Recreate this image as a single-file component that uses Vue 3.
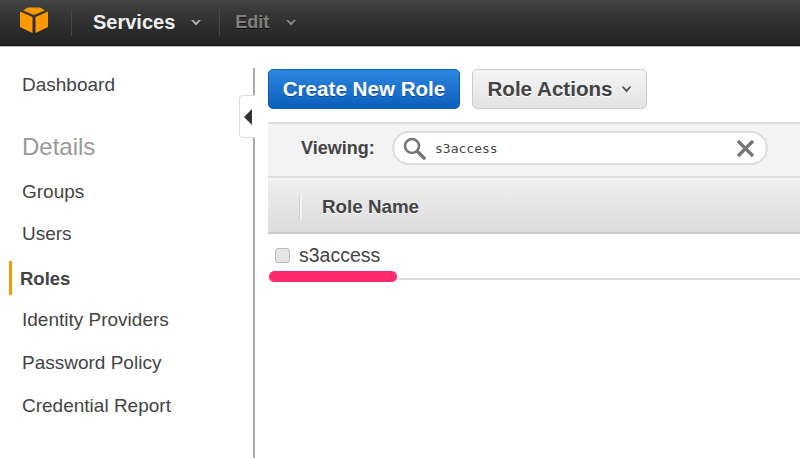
<script setup>
const navTop = ['Dashboard']
const navItems = [
  { label: 'Groups' },
  { label: 'Users' },
  { label: 'Roles', active: true },
  { label: 'Identity Providers' },
  { label: 'Password Policy' },
  { label: 'Credential Report' }
]
</script>

<template>
  <div class="page">
    <header class="topbar">
      <svg class="logo" width="28" height="27" viewBox="0 0 28 27">
        <path d="M0 4.5 L12.5 10 L12.5 26 L0 20 Z" fill="#f90" />
        <path d="M28 4.5 L15.5 10 L15.5 26 L28 20 Z" fill="#f90" />
        <path d="M8 0.5 L20 0.5 L25 3.5 L14 8 L3 3.5 Z" fill="#f90" />
      </svg>
      <span class="sep sep-a"></span>
      <span class="menu services">Services</span>
      <svg class="caret" width="12" height="8" viewBox="0 0 12 8"><path d="M1 1 L6 6.5 L11 1 L8.8 1 L6 3.6 L3.2 1 Z" fill="#b4b4b4" /></svg>
      <span class="sep sep-b"></span>
      <span class="menu edit">Edit</span>
      <svg class="caret" width="12" height="8" viewBox="0 0 12 8"><path d="M1 1 L6 6.5 L11 1 L8.8 1 L6 3.6 L3.2 1 Z" fill="#8a8a8a" /></svg>
    </header>

    <div class="body">
      <aside class="sidebar">
        <a v-for="n in navTop" :key="n" class="nav-item dash">{{ n }}</a>
        <div class="nav-title">Details</div>
        <a v-for="n in navItems" :key="n.label" class="nav-item" :class="{ active: n.active }">{{ n.label }}</a>
        <div class="handle">
          <svg width="9" height="16" viewBox="0 0 9 16"><path d="M8 0 L0 8 L8 16 Z" fill="#333" /></svg>
        </div>
      </aside>

      <main class="main">
        <div class="actions">
          <button class="btn primary">Create New Role</button>
          <button class="btn secondary">Role Actions
            <svg width="11" height="7" viewBox="0 0 11 7"><path d="M0.5 0.5 L5.5 6.5 L10.5 0.5 L8.4 0.5 L5.5 3.4 L2.6 0.5 Z" fill="#555" /></svg>
          </button>
        </div>

        <div class="filter">
          <span class="viewing">Viewing:</span>
          <div class="search">
            <svg class="glass" width="24" height="24" viewBox="0 0 24 24">
              <circle cx="10" cy="10" r="7" fill="none" stroke="#777" stroke-width="2.6" />
              <path d="M15.5 15.5 L22 22" stroke="#777" stroke-width="3.6" stroke-linecap="round" />
            </svg>
            <span class="query">s3access</span>
            <svg class="clear" width="19" height="19" viewBox="0 0 19 19">
              <path d="M2 2 L17 17 M17 2 L2 17" stroke="#757575" stroke-width="3.2" />
            </svg>
          </div>
        </div>

        <div class="thead">
          <span class="th-sep"></span>
          <span class="th">Role Name</span>
        </div>

        <div class="row">
          <span class="check"></span>
          <span class="cell">s3access</span>
          <span class="mark"></span>
        </div>
      </main>
    </div>
  </div>
</template>

<style>
html, body { margin: 0; background: #fff; overflow: hidden; }
</style>

<style scoped>
.page {
  width: 800px;
  height: 458px;
  overflow: hidden;
  font-family: "Liberation Sans", Arial, sans-serif;
  background: #fff;
  color: #444;
}
.topbar {
  height: 46px;
  box-sizing: border-box;
  display: flex;
  align-items: center;
  background: linear-gradient(#444 0%, #363636 30%, #222 100%);
  border-bottom: 1px solid #1c1c1c;
  box-shadow: 0 1px 0 #bbb;
}
.logo { margin-left: 20px; margin-top: -4px; }
.sep { width: 1px; height: 27px; background: #484848; flex: none; }
.sep-a { margin-left: 23px; }
.sep-b { margin-left: 17px; }
.menu { font-weight: 700; }
.services { margin-left: 21px; color: #eee; font-size: 20px; }
.edit { margin-left: 15px; color: #808080; text-shadow: 0 1px 0 #111; font-size: 18px; }
.caret { margin-left: 15px; }
.edit + .caret { margin-left: 16px; }

.body { display: flex; align-items: flex-start; }
.sidebar {
  position: relative;
  box-sizing: border-box;
  width: 255px;
  height: 390px;
  margin-top: 22px;
  padding-left: 22px;
  border-right: 2px solid #aaa;
  display: flex;
  flex-direction: column;
  align-items: flex-start;
}
.nav-item {
  display: block;
  font-size: 19px;
  line-height: 22px;
  color: #444;
  margin-bottom: 21px;
}
.dash { margin-top: 6px; margin-bottom: 0; }
.nav-title {
  font-size: 24px;
  line-height: 28px;
  color: #999;
  margin-top: 37px;
  margin-bottom: 20px;
}
.nav-title + .nav-item { margin-bottom: 20px; }
.nav-item.active {
  font-size: 18.5px;
  font-weight: 700;
  position: relative;
  margin-left: -2px;
  margin-top: 2px;
  margin-bottom: 19px;
}
.nav-item.active::before {
  content: "";
  position: absolute;
  left: -11px;
  top: -7px;
  width: 3px;
  height: 34px;
  background: #f90;
}
.handle {
  position: absolute;
  right: -2px;
  top: 27px;
  width: 16px;
  height: 43px;
  box-sizing: border-box;
  background: #fff;
  border: 1px solid #ddd;
  border-right: 0;
  border-radius: 4px 0 0 4px;
  display: flex;
  align-items: center;
  padding-left: 4px;
}

.main { flex: 1; min-width: 0; padding-left: 13px; }
.actions {
  display: flex;
  gap: 12px;
  padding-top: 23px;
}
.btn {
  height: 40px;
  box-sizing: border-box;
  border-radius: 5px;
  font-family: inherit;
  font-size: 20.6px;
  font-weight: 700;
  padding: 0;
  display: flex;
  align-items: center;
  justify-content: center;
}
.primary {
  width: 192px;
  color: #fff;
  border: 1px solid #0e5fb0;
  background: linear-gradient(#2e86e0, #0a5fbb);
  text-shadow: 0 1px 0 rgba(0, 0, 0, 0.3);
}
.secondary {
  width: 175px;
  gap: 8px;
  color: #444;
  border: 1px solid #ccc;
  background: linear-gradient(#f5f5f5, #e3e3e3);
  text-shadow: 0 1px 0 #fff;
}
.filter {
  margin-top: 13px;
  height: 56px;
  box-sizing: border-box;
  background: #f3f3f3;
  border-top: 2px solid #ddd;
  border-bottom: 2px solid #ddd;
  display: flex;
  align-items: center;
  padding-left: 33px;
  padding-bottom: 4px;
}
.viewing { font-size: 18px; font-weight: 700; color: #444; width: 91px; flex: none; }
.search {
  width: 376px;
  height: 34px;
  box-sizing: border-box;
  background: #fff;
  border: 2px solid #ddd;
  border-radius: 17px;
  display: flex;
  align-items: center;
  padding-left: 8px;
  flex: none;
}
.glass { flex: none; }
.query {
  margin-left: 9px;
  font-family: "DejaVu Sans Mono", monospace;
  font-size: 13px;
  color: #444;
}
.clear { margin-left: auto; margin-right: 11px; }
.thead {
  height: 56px;
  box-sizing: border-box;
  background: linear-gradient(#eee, #ddd);
  border-bottom: 2px solid #ccc;
  border-top: 2px solid #f6f6f6;
  display: flex;
  align-items: center;
  padding-left: 32px;
  padding-top: 2px;
}
.th-sep { width: 2px; height: 24px; background: #f5f5f5; box-shadow: -1px 0 0 #d0d0d0; }
.th { margin-left: 20px; font-size: 18.8px; font-weight: 700; color: #444; text-shadow: 0 1px 0 #fff; }
.row {
  position: relative;
  height: 46px;
  box-sizing: border-box;
  border-bottom: 2px solid #ddd;
  display: flex;
  align-items: flex-start;
  padding-left: 7px;
}
.check {
  width: 15px;
  height: 15px;
  margin-top: 14px;
  box-sizing: border-box;
  border: 1px solid #bbb;
  border-radius: 3px;
  background: #e6e6e6;
  flex: none;
}
.cell { margin-left: 9px; margin-top: 10px; font-size: 19.5px; line-height: 22px; color: #444; }
.mark {
  position: absolute;
  left: 1px;
  top: 37px;
  width: 128px;
  height: 11px;
  border-radius: 6px;
  background: #fe2c6c;
}
</style>
